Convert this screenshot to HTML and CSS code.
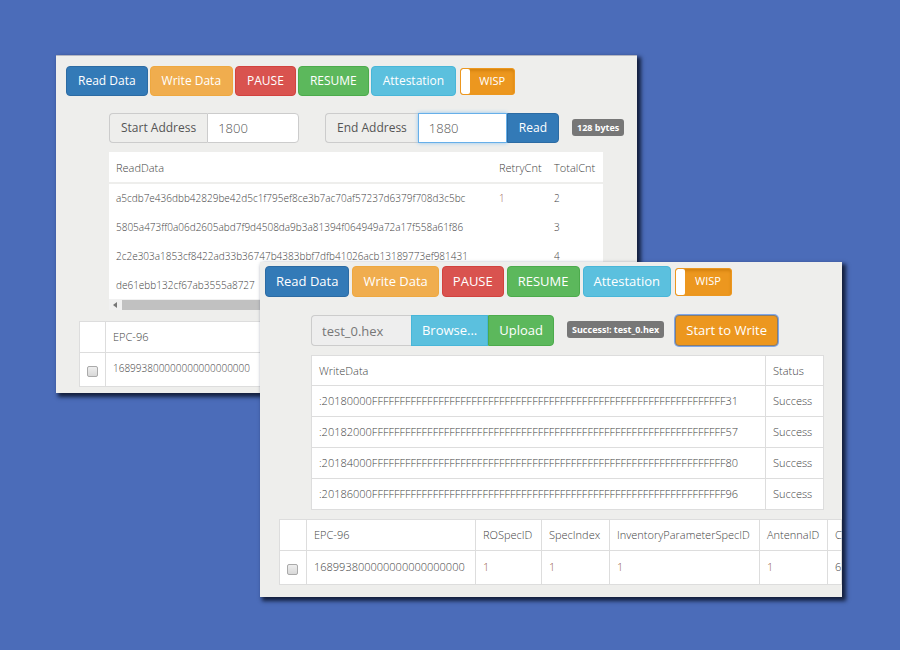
FILE: index.html
```html
<!DOCTYPE html>
<html lang="en">
<head>
<meta charset="utf-8">
<title>WISP console</title>
<link rel="stylesheet" href="styles.css">
</head>
<body>
<main class="desktop">
  <section class="window window-read">
    <nav class="toolbar">
      <button class="btn primary" type="button">Read Data</button>
      <button class="btn warning" type="button">Write Data</button>
      <button class="btn danger" type="button">PAUSE</button>
      <button class="btn success" type="button">RESUME</button>
      <button class="btn info" type="button">Attestation</button>
      <button class="switch" type="button"><span class="knob"></span><span class="switch-label">WISP</span></button>
    </nav>
    <form class="controls">
      <div class="group start">
        <label class="addon" for="start">Start Address</label>
        <input class="field" id="start" type="text" value="1800">
      </div>
      <div class="group end">
        <label class="addon" for="end">End Address</label>
        <input class="field focused" id="end" type="text" value="1880">
        <button class="btn primary" type="button">Read</button>
      </div>
      <span class="badge">128 bytes</span>
    </form>
    <div class="scroller">
      <table class="read-table">
        <colgroup><col><col class="col-retry"><col class="col-total"></colgroup>
        <thead><tr><th>ReadData</th><th>RetryCnt</th><th>TotalCnt</th></tr></thead>
        <tbody>
          <tr><td>a5cdb7e436dbb42829be42d5c1f795ef8ce3b7ac70af57237d6379f708d3c5bc</td><td class="retry">1</td><td>2</td></tr>
          <tr><td>5805a473ff0a06d2605abd7f9d4508da9b3a81394f064949a72a17f558a61f86</td><td></td><td>3</td></tr>
          <tr><td>2c2e303a1853cf8422ad33b36747b4383bbf7dfb41026acb13189773ef981431</td><td></td><td>4</td></tr>
          <tr><td>de61ebb132cf67ab3555a8727</td><td></td><td></td></tr>
        </tbody>
      </table>
      <div class="scrollbar"><span class="arrow"></span><span class="thumb"></span></div>
    </div>
    <div class="tags">
      <table class="grid-table">
        <colgroup><col class="col-check"><col></colgroup>
        <thead><tr><th></th><th>EPC-96</th></tr></thead>
        <tbody><tr><td class="check"><input type="checkbox" aria-label="Select tag"></td><td>168993800000000000000000</td></tr></tbody>
      </table>
    </div>
  </section>

  <section class="window window-write">
    <nav class="toolbar">
      <button class="btn primary" type="button">Read Data</button>
      <button class="btn warning" type="button">Write Data</button>
      <button class="btn danger" type="button">PAUSE</button>
      <button class="btn success" type="button">RESUME</button>
      <button class="btn info" type="button">Attestation</button>
      <button class="switch" type="button"><span class="knob"></span><span class="switch-label">WISP</span></button>
    </nav>
    <form class="controls">
      <div class="group file">
        <input class="field readonly" type="text" value="test_0.hex" aria-label="Firmware file" readonly>
        <button class="btn info" type="button">Browse...</button>
        <button class="btn success" type="button">Upload</button>
      </div>
      <span class="badge">Success!: test_0.hex</span>
      <button class="btn start-write" type="button">Start to Write</button>
    </form>
    <div class="writes">
      <table class="grid-table">
        <colgroup><col><col class="col-status"></colgroup>
        <thead><tr><th>WriteData</th><th>Status</th></tr></thead>
        <tbody>
          <tr><td>:20180000FFFFFFFFFFFFFFFFFFFFFFFFFFFFFFFFFFFFFFFFFFFFFFFFFFFFFFFFFFFFFFFF31</td><td>Success</td></tr>
          <tr><td>:20182000FFFFFFFFFFFFFFFFFFFFFFFFFFFFFFFFFFFFFFFFFFFFFFFFFFFFFFFFFFFFFFFF57</td><td>Success</td></tr>
          <tr><td>:20184000FFFFFFFFFFFFFFFFFFFFFFFFFFFFFFFFFFFFFFFFFFFFFFFFFFFFFFFFFFFFFFFF80</td><td>Success</td></tr>
          <tr><td>:20186000FFFFFFFFFFFFFFFFFFFFFFFFFFFFFFFFFFFFFFFFFFFFFFFFFFFFFFFFFFFFFFFF96</td><td>Success</td></tr>
        </tbody>
      </table>
    </div>
    <div class="tags">
      <table class="grid-table">
        <colgroup><col class="col-check"><col class="col-epc"><col class="col-rospec"><col class="col-spec"><col class="col-inventory"><col class="col-antenna"><col></colgroup>
        <thead><tr><th></th><th>EPC-96</th><th>ROSpecID</th><th>SpecIndex</th><th>InventoryParameterSpecID</th><th>AntennaID</th><th>C</th></tr></thead>
        <tbody><tr><td class="check"><input type="checkbox" aria-label="Select tag"></td><td>168993800000000000000000</td><td class="retry">1</td><td class="retry">1</td><td class="retry">1</td><td class="retry">1</td><td>6</td></tr></tbody>
      </table>
    </div>
  </section>
</main>
</body>
</html>
```
FILE: styles.css
```css
* { box-sizing: border-box; }

body {
  margin: 0;
  background: #4b6cb9;
  color: #444;
  font-family: "Open Sans", "Noto Sans", sans-serif;
  font-size: 12px;
}

.desktop {
  position: relative;
  min-height: 100vh;
  overflow: hidden;
}

.window {
  position: absolute;
  overflow: hidden;
  background: #eeeeec;
  box-shadow: 3px 3px 4px 1px #14203f;
}

.window-read {
  top: 55px;
  left: 56px;
  right: 263px;
  padding-bottom: 6px;
  border-top: 1px solid #b4b6c0;
}

.window-write {
  top: 262px;
  left: 260px;
  right: 58px;
  padding-bottom: 12px;
}

.toolbar, .controls, .group {
  display: flex;
  align-items: center;
}

.window-read .toolbar { gap: 2px; padding: 10px 10px 0; }
.window-write .toolbar { gap: 3px; padding: 4px 5px 0; }

.btn {
  height: 30px;
  padding: 0 11px 2px;
  border: 1px solid;
  border-radius: 4px;
  color: #fff;
  font: 12px "Open Sans", "Noto Sans", sans-serif;
  white-space: nowrap;
}

.window-write .btn { height: 31px; padding: 0 10px 2px; }
.window-write .btn, .window-write .field { font-size: 13px; }

.primary { background: #337ab7; border-color: #2c6ba3; }
.warning { background: #f0ad4e; border-color: #eea840; }
.danger { background: #d9534f; border-color: #d2423e; }
.success { background: #5cb85c; border-color: #4cab4c; }
.info { background: #5bc0de; border-color: #48b6d8; }

.switch {
  display: flex;
  width: 55px;
  height: 27px;
  margin-left: 2px;
  padding: 0;
  overflow: hidden;
  border: 1px solid #ec971f;
  border-radius: 3px;
  background: #ec971f;
  box-shadow: inset 0 2px 3px #d4830f;
  color: #fff;
  font: 11px "Open Sans", "Noto Sans", sans-serif;
}

.window-write .switch { width: 57px; height: 28px; margin-left: 1px; }

.knob {
  width: 9px;
  height: 100%;
  border-radius: 2px;
  background: #fff;
}

.switch-label {
  flex: 1;
  align-self: center;
  padding-bottom: 2px;
  text-align: center;
}

.window-read .controls { padding: 17px 14px 0 53px; }
.window-write .controls { padding: 18px 64px 0 51px; }

.addon {
  height: 30px;
  padding: 0 11px;
  border: 1px solid #ccc;
  border-right: 0;
  border-radius: 4px 0 0 4px;
  color: #555;
  line-height: 28px;
  white-space: nowrap;
}

.field {
  flex: 1;
  min-width: 0;
  height: 30px;
  padding: 0 10px;
  border: 1px solid #ccc;
  border-radius: 0 4px 4px 0;
  background: #fff;
  color: #555;
  font: 300 13px "Open Sans", "Noto Sans", sans-serif;
}

.start { width: 190px; }
.end { width: 234px; margin-left: 26px; }
.end .field { border-radius: 0; }
.group .btn { border-radius: 0; }
.group .btn:last-child { border-radius: 0 4px 4px 0; }

.focused {
  border-color: #66afe9;
  box-shadow: 0 0 4px #8fc4ee;
}

.file { width: 243px; }

.window-write .field {
  height: 31px;
  border-right: 0;
  border-radius: 4px 0 0 4px;
  background: #eee;
  color: #777;
  font-weight: 400;
}

.badge {
  margin-left: 13px;
  padding: 0 5px;
  border-radius: 3px;
  background: #777;
  color: #fff;
  font-size: 9px;
  font-weight: 700;
  line-height: 17px;
  white-space: nowrap;
}

.controls .badge { margin-bottom: 2px; }

.window-write .start-write {
  margin-left: auto;
  border-color: #8a7c6a;
  background: #ec971f;
  box-shadow: 0 0 0 1px #7da7ec;
}

table {
  width: 100%;
  border-collapse: collapse;
  table-layout: fixed;
  background: #fff;
  font-size: 11px;
  font-weight: 300;
}

th, td {
  padding: 0 7px;
  font-weight: 300;
  text-align: left;
  white-space: nowrap;
}

.retry { color: #96594f; }

.scroller { margin: 9px 34px 0 53px; background: #fff; }
.read-table td { font-size: 10px; }
.read-table th { height: 31px; border-bottom: 2px solid #eeeeec; font-size: 11px; }
.read-table td { height: 29px; }
.col-retry { width: 55px; }
.col-total { width: 56px; }

.scrollbar {
  display: flex;
  align-items: center;
  height: 11px;
  background: #f1f1f1;
}

.arrow {
  width: 4px;
  margin: 0 5px 0 4px;
  border: solid transparent;
  border-width: 3px 4px 3px 0;
  border-right-color: #777;
}

.thumb {
  flex: 1;
  height: 10px;
  background: #c1c1c1;
}

.grid-table th, .grid-table td { border: 1px solid #ddd; }
.grid-table th { height: 30px; padding-bottom: 1px; }
.grid-table td { height: 31px; padding-bottom: 1px; }

.tags .grid-table th { height: 31px; }
.tags .grid-table td { height: 34px; padding-bottom: 3px; }
.window-read .tags { margin: 11px 0 0 23px; }
.window-read .tags td { font-size: 10px; }
.window-write .tags { margin: 9px 0 0 19px; }
.window-write .writes { margin: 9px 18px 0 51px; }

.col-check { width: 27px; }
.col-status { width: 58px; }
.col-epc { width: 169px; }
.col-rospec { width: 66px; }
.col-spec { width: 68px; }
.col-inventory { width: 150px; }
.col-antenna { width: 68px; }
.window-read .col-check { width: 26px; }

.tags .grid-table .check { padding: 3px 0 0 7px; }

input[type="checkbox"] {
  display: block;
  width: 11px;
  height: 11px;
  margin: 0;
  appearance: none;
  border: 1px solid #aaa;
  border-radius: 2px;
  background: linear-gradient(#eee, #d8d8d8);
}
```
